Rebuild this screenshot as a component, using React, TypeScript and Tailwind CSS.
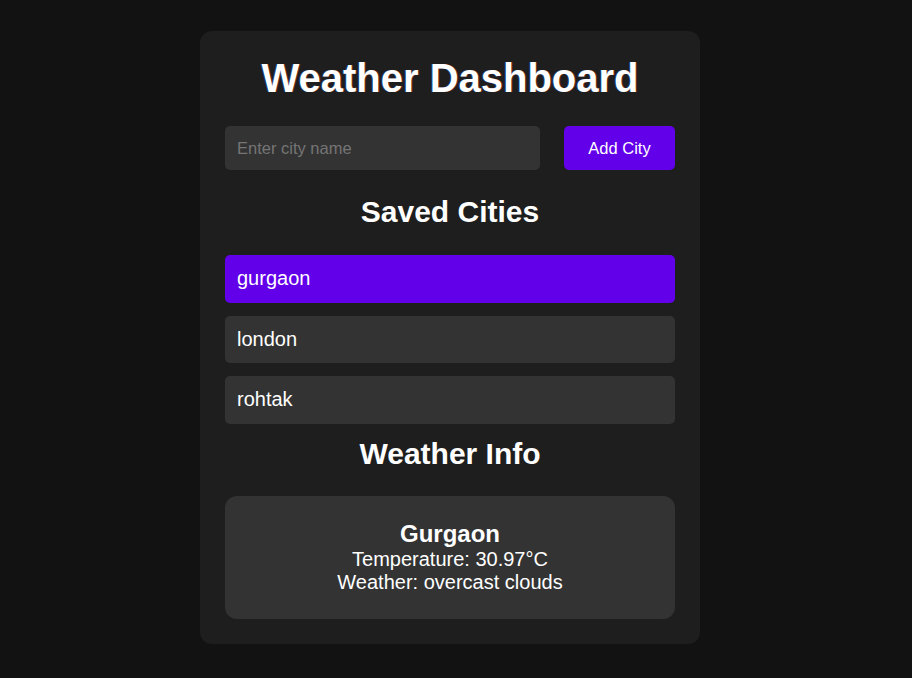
import { useState } from 'react';

type Weather = { name: string; temp: number; description: string };

const CITIES = ['gurgaon', 'london', 'rohtak'];

export default function App() {
  const [city, setCity] = useState('');
  const [selected, setSelected] = useState('gurgaon');
  const weather: Weather = { name: 'Gurgaon', temp: 30.97, description: 'overcast clouds' };

  return (
    <div className="min-h-screen bg-[#121212] text-white font-['Liberation_Sans',Arial,sans-serif] pt-[31px] pb-8 pr-3 flex justify-center items-start">
      <div className="w-[500px] rounded-[12px] bg-[#1e1e1e] p-[25px]">
        <h1 className="text-center text-[40px] font-bold leading-[45px] mb-[25px] [text-shadow:-1px_0_rgba(0,120,255,0.35),1px_0_rgba(255,70,0,0.35)]">
          Weather Dashboard
        </h1>

        <div className="flex gap-6">
          <input
            value={city}
            onChange={e => setCity(e.target.value)}
            placeholder="Enter city name"
            className="flex-1 h-[44px] rounded-[5px] bg-[#333] px-3 text-[16.5px] text-white outline-none placeholder:text-[#757575]"
          />
          <button className="h-[44px] w-[111px] rounded-[5px] bg-[#6200ea] text-[16.5px] text-white">
            Add City
          </button>
        </div>

        <h2 className="mt-[25px] mb-[26px] text-center text-[30px] font-bold leading-[34px]">Saved Cities</h2>

        <ul className="flex flex-col gap-[13px]">
          {CITIES.map(c => (
            <li
              key={c}
              onClick={() => setSelected(c)}
              className={
                'cursor-pointer rounded-[5px] px-3 py-3 text-[20px] leading-[23.5px] ' +
                (selected === c ? 'bg-[#6200ea]' : 'bg-[#333]')
              }
            >
              {c}
            </li>
          ))}
        </ul>

        <h2 className="mt-[13px] mb-[25.5px] text-center text-[30px] font-bold leading-[34px]">Weather Info</h2>

        <div className="rounded-[12px] bg-[#333] px-6 pt-6 pb-[25px] text-center">
          <h3 className="text-[24px] font-bold leading-[28px]">{weather.name}</h3>
          <p className="text-[20px] leading-[23px]">Temperature: {weather.temp}°C</p>
          <p className="text-[20px] leading-[23px]">Weather: {weather.description}</p>
        </div>
      </div>
    </div>
  );
}
